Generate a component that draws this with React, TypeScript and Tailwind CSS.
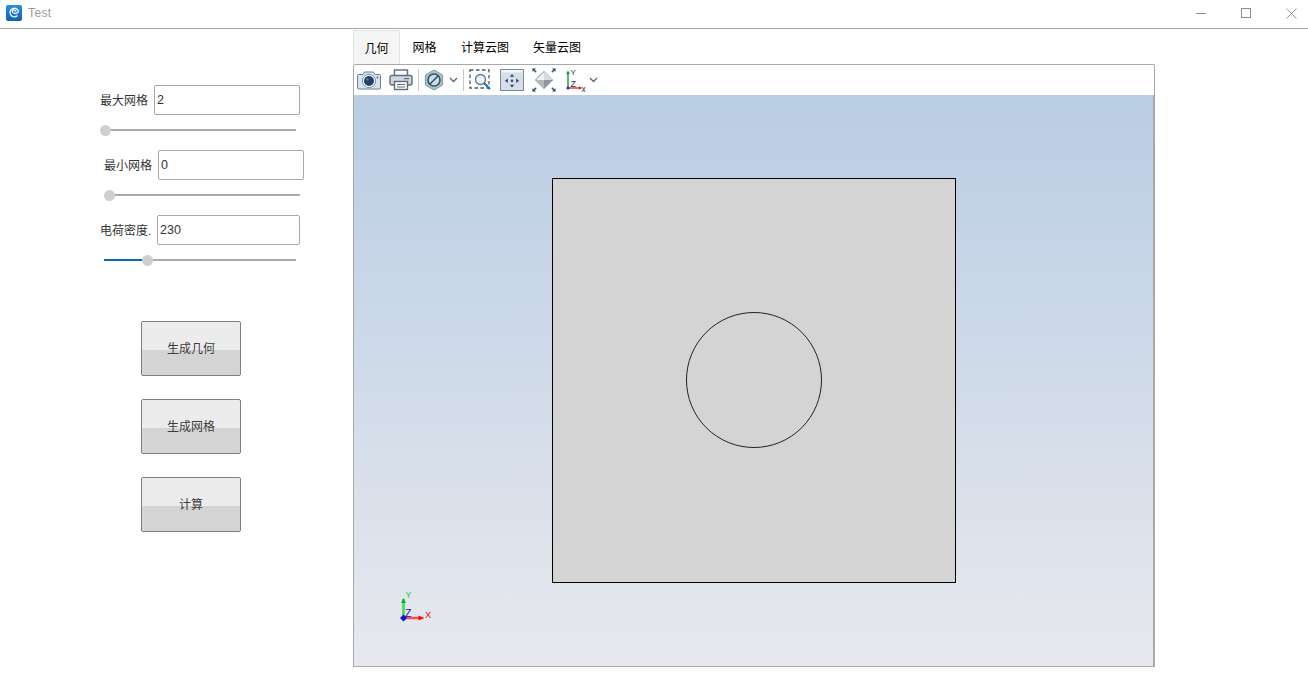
import React from "react";

const font = { fontFamily: '"Liberation Sans", "Noto Sans CJK SC", sans-serif' };

function Field({ ml, label, value, labelW, inputW, trackW, fill, thumb, gap }: { ml: string; label: string; value: string; labelW: string; inputW: string; trackW: string; fill: number; thumb: number; gap: string }) {
  return (
    <div className={ml}>
      <div className="flex items-center h-[30px]">
        <span className={`${labelW} pt-[2px] text-[12px] leading-none text-[#333] whitespace-nowrap`}>{label}</span>
        <div className={`${inputW} ${gap} h-[30px] border border-[#a8a8a8] rounded-[2px] bg-white flex items-center pl-[2px] pt-[1px] text-[12.5px] text-[#333]`}>{value}</div>
      </div>
      <div className={`relative ${trackW} h-[2px] mt-[14px] ml-[4px] bg-[#aaaaaa]`}>
        {fill > 0 && <div className="h-full bg-[#0f69b4]" style={{ width: fill }} />}
        <div className="absolute -top-[4px] w-[11px] h-[11px] rounded-full bg-[#cfcfcf]" style={{ left: thumb }} />
      </div>
    </div>
  );
}

function Btn({ label }: { label: string }) {
  return (
    <div className="relative w-[100px] h-[55px] rounded-[2px] border border-[#7f7f7f] bg-[linear-gradient(#ececec_0,#ececec_52%,#d4d4d4_52%,#d4d4d4_100%)] flex items-center justify-center text-[12px] text-[#3c3c3c]">
      {label}
    </div>
  );
}

function Tab({ label, active, w }: { label: string; active?: boolean; w: string }) {
  return (
    <div className={`${w} h-[34px] pt-[2px] flex items-center justify-center text-[12px] text-black ${active ? "bg-[#f5f5f5] border border-b-0 border-[#e2e2e2]" : ""}`}>
      {label}
    </div>
  );
}

function Chevron() {
  return (
    <svg width="9" height="6" viewBox="0 0 9 6" className="shrink-0">
      <path d="M1 1l3.5 3.5L8 1" fill="none" stroke="#5a6470" strokeWidth="1.3" />
    </svg>
  );
}

function Camera() {
  return (
    <svg width="24" height="20" viewBox="0 0 24 20">
      <path d="M1.5 4.5H6L7.5 2h9L18 4.5h4.5a1 1 0 0 1 1 1V18a1 1 0 0 1-1 1h-21a1 1 0 0 1-1-1V5.5a1 1 0 0 1 1-1z" fill="#d7e2ef" stroke="#6e7f94" />
      <circle cx="12" cy="11" r="6.6" fill="#fff" stroke="#7d8ea3" />
      <circle cx="12" cy="11" r="5" fill="#1f3f70" />
      <circle cx="10.5" cy="9.5" r="1.2" fill="#5b7ba6" />
      <circle cx="20.5" cy="7.5" r="0.9" fill="#5a6a80" />
    </svg>
  );
}

function Printer() {
  return (
    <svg width="24" height="22" viewBox="0 0 24 22">
      <rect x="5.5" y="1" width="13" height="6" fill="#fff" stroke="#5e6c7b" strokeWidth="1.4" />
      <rect x="1" y="6.5" width="22" height="9.5" rx="2" fill="#cfd8e2" stroke="#5e6c7b" strokeWidth="1.4" />
      <rect x="15" y="9" width="5" height="1.2" fill="#5e6c7b" />
      <rect x="5.5" y="12.5" width="13" height="8" fill="#fff" stroke="#5e6c7b" strokeWidth="1.4" />
      <path d="M8 15.5h8M8 18h8" stroke="#5e6c7b" strokeWidth="1.1" />
    </svg>
  );
}

function Hex() {
  return (
    <svg width="20" height="22" viewBox="0 0 20 22">
      <path d="M10 1l8.6 5v10L10 21l-8.6-5V6z" fill="#a9c3c9" stroke="#7d9ba3" />
      <circle cx="10" cy="11" r="6" fill="#cfdde0" stroke="#34536a" strokeWidth="1.6" />
      <path d="M6 15l8-8" stroke="#34536a" strokeWidth="1.6" />
    </svg>
  );
}

function ZoomBox() {
  return (
    <svg width="23" height="22" viewBox="0 0 23 22">
      <rect x="1" y="1" width="19" height="18" fill="none" stroke="#46586c" strokeWidth="1.3" strokeDasharray="3.5 2.5" />
      <circle cx="11.5" cy="10.5" r="5" fill="#eef4fa" stroke="#5c7a96" strokeWidth="1.3" />
      <path d="M15.2 14.2l5.8 5.8" stroke="#1f72b8" strokeWidth="2.2" />
    </svg>
  );
}

function Pan() {
  return (
    <svg width="24" height="22" viewBox="0 0 24 22">
      <rect x="0.5" y="0.5" width="23" height="21" fill="#d5deea" stroke="#7a8a9e" />
      <rect x="1" y="1" width="22" height="2.5" fill="#f2f4f7" />
      <path d="M12 5l-2.2 2.8h4.4zM12 18.5l-2.2-2.8h4.4zM5 11.7l2.8-2.2v4.4zM19 11.7l-2.8-2.2v4.4z" fill="#2e4560" />
      <circle cx="12" cy="11.7" r="1.2" fill="#2e4560" />
    </svg>
  );
}

function Fit() {
  return (
    <svg width="24" height="24" viewBox="0 0 24 24">
      <path d="M12 3.5l8.5 8.5-8.5 8.5L3.5 12z" fill="#f0f1f3" stroke="#7c8590" />
      <path d="M12 12h8.5L12 20.5z" fill="#8e959e" />
      <path d="M12 12H3.5L12 20.5z" fill="#b4b9c0" />
      <path d="M12 3.5V12h8.5z" fill="#d8dbdf" />
      <path d="M1 1l3.2 3.2M23 1l-3.2 3.2M1 23l3.2-3.2M23 23l-3.2-3.2" stroke="#36506c" strokeWidth="1.5" />
      <path d="M.5.5h3.6L.5 4.1zM23.5.5h-3.6l3.6 3.6zM.5 23.5h3.6L.5 19.9zM23.5 23.5h-3.6l3.6-3.6z" fill="#36506c" />
    </svg>
  );
}

function AxisIcon() {
  return (
    <svg width="22" height="24" viewBox="0 0 22 24" style={font}>
      <path d="M3 4.5V20" stroke="#1c9a4a" strokeWidth="1.5" />
      <path d="M3 2.5l-2 3.5h4z" fill="#1c9a4a" />
      <path d="M3 20h13" stroke="#e02020" strokeWidth="1.3" />
      <path d="M17 20l-3.2-1.8v3.6z" fill="#e02020" />
      <circle cx="3" cy="20" r="1.6" fill="#1a3fb0" />
      <text x="5.5" y="7" fontSize="8" fill="#333">Y</text>
      <text x="5.5" y="18.5" fontSize="9" fill="#333">Z</text>
      <text x="16.5" y="23.5" fontSize="8.5" fill="#333">x</text>
    </svg>
  );
}

function Triad() {
  return (
    <svg width="36" height="36" viewBox="0 0 36 36" style={font}>
      <path d="M3.5 29V10" stroke="#33e04a" strokeWidth="2.5" />
      <path d="M3.5 9l-2.5 5h5z" fill="#0fb030" />
      <path d="M3.5 29h20" stroke="#ff5050" strokeWidth="2.5" />
      <path d="M23.5 29l-5-2.5v5z" fill="#e01515" />
      <path d="M0 29L3.5 25.5 7 29 3.5 32.5z" fill="#1414d0" />
      <text x="5.5" y="9" fontSize="9" fill="#22d03a">Y</text>
      <text x="5" y="27.5" fontSize="10.5" fill="#1414d0">Z</text>
      <text x="25" y="29" fontSize="9.5" fill="#f01515">X</text>
    </svg>
  );
}

export default function App() {
  return (
    <div className="w-[1308px] h-[694px] bg-white overflow-hidden flex flex-col" style={font}>
      <div className="h-[29px] shrink-0 border-b border-[#a6a6a6] flex items-center justify-between pb-[2px]">
        <div className="flex items-center pl-[6px] gap-[6px]">
          <svg width="16" height="16" viewBox="0 0 16 16">
            <defs>
              <linearGradient id="lg" x1="0" y1="0" x2="0" y2="1">
                <stop offset="0" stopColor="#2b8fd8" />
                <stop offset="1" stopColor="#0f60ad" />
              </linearGradient>
            </defs>
            <rect width="16" height="16" rx="2" fill="url(#lg)" />
            <path d="M11.5 10.5A4.3 4.3 0 1 1 12.5 6.5c-.3 1.8-3.5 2.5-5 1.4M9.8 6.8a1.7 1.7 0 1 0-2.9 1" fill="none" stroke="#e8f3fb" strokeWidth="1.4" />
          </svg>
          <span className="text-[12px] tracking-[0.4px] text-[#9a9a9a]">Test</span>
        </div>
        <div className="flex items-center gap-[35px] pr-[11px]">
          <svg width="10" height="10" viewBox="0 0 10 10"><path d="M0 5.5h10" stroke="#8c8c8c" /></svg>
          <svg width="10" height="10" viewBox="0 0 10 10"><rect x=".5" y=".5" width="9" height="9" fill="none" stroke="#8c8c8c" /></svg>
          <svg width="11" height="11" viewBox="0 0 11 11"><path d="M.5.5l10 10M10.5.5l-10 10" stroke="#8c8c8c" strokeWidth=".9" /></svg>
        </div>
      </div>

      <div className="flex flex-1 min-h-0">
        <div className="w-[353px] shrink-0 pt-[56px]">
          <Field ml="ml-[100px]" label="最大网格" value="2" labelW="w-[48px]" gap="ml-[6px]" inputW="w-[146px]" trackW="w-[192px]" fill={0} thumb={-4} />
          <div className="h-[19px]" />
          <Field ml="ml-[104px]" label="最小网格" value="0" labelW="w-[48px]" gap="ml-[6px]" inputW="w-[146px]" trackW="w-[192px]" fill={0} thumb={-4} />
          <div className="h-[19px]" />
          <Field ml="ml-[100px]" label="电荷密度." value="230" labelW="w-[51px]" gap="ml-[6px]" inputW="w-[143px]" trackW="w-[192px]" fill={40} thumb={38} />
          <div className="ml-[141px] mt-[60px] flex flex-col gap-[23px]">
            <Btn label="生成几何" />
            <Btn label="生成网格" />
            <Btn label="计算" />
          </div>
        </div>

        <div className="w-[802px] shrink-0 flex flex-col pt-[1px]">
          <div className="flex h-[34px] shrink-0">
            <Tab label="几何" active w="w-[47px]" />
            <Tab label="网格" w="w-[49px]" />
            <Tab label="计算云图" w="w-[72px]" />
            <Tab label="矢量云图" w="w-[72px]" />
          </div>
          <div className="h-[31px] shrink-0 border border-[#a8a8a8] border-b-0 rounded-t-[2px] flex items-center pl-[3px]">
            <Camera />
            <div className="w-[8px]" />
            <Printer />
            <div className="w-px h-[22px] bg-[#c8c8c8] ml-[5px] mr-[5px]" />
            <Hex />
            <div className="w-[5px]" />
            <Chevron />
            <div className="w-px h-[22px] bg-[#c8c8c8] ml-[5px] mr-[5px]" />
            <ZoomBox />
            <div className="w-[8px]" />
            <Pan />
            <div className="w-[8px]" />
            <Fit />
            <div className="w-[9px]" />
            <AxisIcon />
            <div className="w-[2px]" />
            <Chevron />
          </div>
          <div className="relative h-[572px] shrink-0 border-l border-b border-r-2 border-[#a8a8a8] bg-[linear-gradient(#b9cde4,#e8e9ee)] flex justify-center">
            <div className="mt-[83px] ml-[1px] w-[404px] h-[405px] bg-[#d4d4d4] border border-black flex items-center justify-center pb-[1px]">
              <div className="w-[136px] h-[136px] rounded-full border border-[#222]" />
            </div>
            <div className="absolute left-[46px] top-[494px]">
              <Triad />
            </div>
          </div>
        </div>
      </div>
    </div>
  );
}
